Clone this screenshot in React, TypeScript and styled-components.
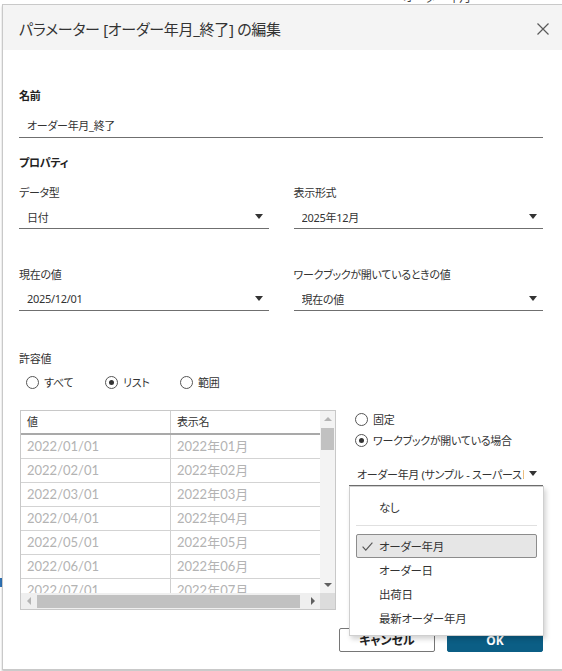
import React from "react";
import styled, { createGlobalStyle } from "styled-components";

const GlobalStyle = createGlobalStyle`
    html, body {
        margin: 0;
        padding: 0;
        background: #ffffff;
    }
    body {
        font-family: "Noto Sans", "Noto Sans CJK JP", sans-serif;
        font-feature-settings: "palt";
        letter-spacing: -0.3px;
        color: #333333;
    }
    * {
        box-sizing: border-box;
    }
`;

const rows = [
    ["2022/01/01", "2022年01月"],
    ["2022/02/01", "2022年02月"],
    ["2022/03/01", "2022年03月"],
    ["2022/04/01", "2022年04月"],
    ["2022/05/01", "2022年05月"],
    ["2022/06/01", "2022年06月"],
    ["2022/07/01", "2022年07月"],
];

const menuItems = ["オーダー年月", "オーダー日", "出荷日", "最新オーダー年月"];

const Radio = ({ checked, label }: { checked?: boolean; label: string }) => (
    <RadioLabel>
        <RadioCircle $checked={checked} />
        {label}
    </RadioLabel>
);

const App = () => {
    return (
        <>
            <GlobalStyle />
            <Screen>
                <BehindText>オーダー年月</BehindText>
                <BehindMark />
                <Dialog>
                    <Header>
                        <Title>パラメーター [オーダー年月_終了] の編集</Title>
                        <CloseButton aria-label="閉じる">
                            <svg width="12" height="12" viewBox="0 0 12 12">
                                <path
                                    d="M0.5 0.5 L11.5 11.5 M11.5 0.5 L0.5 11.5"
                                    stroke="#5a5a5a"
                                    strokeWidth="1.2"
                                />
                            </svg>
                        </CloseButton>
                    </Header>
                    <Body>
                        <SectionLabel $top={38}>名前</SectionLabel>
                        <TextField>オーダー年月_終了</TextField>
                        <SectionLabel $top={17}>プロパティ</SectionLabel>
                        <FieldGrid>
                            <Field>
                                <Label>データ型</Label>
                                <Select>
                                    <SelectValue>日付</SelectValue>
                                    <Arrow />
                                </Select>
                            </Field>
                            <Field>
                                <Label>表示形式</Label>
                                <Select>
                                    <SelectValue>2025年12月</SelectValue>
                                    <Arrow />
                                </Select>
                            </Field>
                            <Field>
                                <Label>現在の値</Label>
                                <Select>
                                    <SelectValue>2025/12/01</SelectValue>
                                    <Arrow />
                                </Select>
                            </Field>
                            <Field>
                                <Label>ワークブックが開いているときの値</Label>
                                <Select>
                                    <SelectValue>現在の値</SelectValue>
                                    <Arrow />
                                </Select>
                            </Field>
                        </FieldGrid>
                        <Label $top={40}>許容値</Label>
                        <RadioRow>
                            <Radio label="すべて" />
                            <Radio label="リスト" checked />
                            <Radio label="範囲" />
                        </RadioRow>
                        <ListArea>
                            <Table>
                                <TableContent>
                                    <HeaderRow>
                                        <HeadCell>値</HeadCell>
                                        <HeadCell>表示名</HeadCell>
                                    </HeaderRow>
                                    {rows.map((row, index) => (
                                        <Row key={index}>
                                            <Cell>{row[0]}</Cell>
                                            <Cell>{row[1]}</Cell>
                                        </Row>
                                    ))}
                                </TableContent>
                                <VScroll>
                                    <ScrollButton>
                                        <TriUp />
                                    </ScrollButton>
                                    <VThumb />
                                    <ScrollButton>
                                        <TriDown />
                                    </ScrollButton>
                                </VScroll>
                                <HScroll>
                                    <ScrollButton>
                                        <TriLeft />
                                    </ScrollButton>
                                    <HThumb />
                                    <ScrollButton>
                                        <TriRight />
                                    </ScrollButton>
                                </HScroll>
                                <Corner />
                            </Table>
                            <SidePanel>
                                <SideRadios>
                                    <Radio label="固定" />
                                    <Radio label="ワークブックが開いている場合" checked />
                                </SideRadios>
                                <SourceSelect>
                                    <Select>
                                        <SelectValue>
                                            オーダー年月 (サンプル - スーパーストア)
                                        </SelectValue>
                                        <Arrow />
                                    </Select>
                                    <Menu>
                                        <MenuItem>なし</MenuItem>
                                        <MenuSeparator />
                                        {menuItems.map((item, index) => (
                                            <MenuItem key={item} $selected={index === 0}>
                                                {index === 0 && (
                                                    <CheckMark width="11" height="9" viewBox="0 0 11 9">
                                                        <polyline
                                                            points="0.6,4.6 3.8,8.2 10.4,0.6"
                                                            fill="none"
                                                            stroke="#555"
                                                            strokeWidth="1.1"
                                                        />
                                                    </CheckMark>
                                                )}
                                                {item}
                                            </MenuItem>
                                        ))}
                                    </Menu>
                                </SourceSelect>
                            </SidePanel>
                        </ListArea>
                        <Footer>
                            <Button>キャンセル</Button>
                            <Button $primary>OK</Button>
                        </Footer>
                    </Body>
                </Dialog>
            </Screen>
        </>
    );
};

const Screen = styled.div`
    position: relative;
    width: 562px;
    height: 671px;
    overflow: hidden;
    background: #ffffff;
`;

const BehindText = styled.div`
    position: absolute;
    top: -10px;
    left: 403px;
    font-size: 12px;
    line-height: 16px;
    color: #444444;
`;

const BehindMark = styled.div`
    position: absolute;
    left: 0;
    top: 578px;
    width: 2px;
    height: 9px;
    background: #2f73b6;
`;

const Dialog = styled.div`
    position: absolute;
    top: 4px;
    left: 2px;
    width: 566px;
    height: 666px;
    background: #ffffff;
    border: 1px solid #c9c9c9;
    box-shadow: 0 2px 2px rgba(0, 0, 0, 0.22);
    display: flex;
    flex-direction: column;
`;

const Header = styled.div`
    height: 45px;
    flex-shrink: 0;
    background: #f4f4f4;
    display: flex;
    align-items: center;
    justify-content: space-between;
    padding: 2px 18px 0 16px;
`;

const Title = styled.h1`
    margin: 0;
    font-size: 15px;
    font-weight: 400;
    color: #333333;
`;

const CloseButton = styled.button`
    border: none;
    background: none;
    padding: 0;
    width: 12px;
    height: 12px;
    display: flex;
    cursor: pointer;
`;

const Body = styled.div`
    flex: 1;
    display: flex;
    flex-direction: column;
    padding: 0 24px 0 16px;
`;

const SectionLabel = styled.div<{ $top: number }>`
    margin-top: ${(props) => props.$top}px;
    font-size: 11px;
    font-weight: 700;
    line-height: 16px;
    color: #222222;
`;

const Label = styled.div<{ $top?: number }>`
    margin-top: ${(props) => props.$top || 0}px;
    font-size: 11px;
    line-height: 16px;
    color: #333333;
    white-space: nowrap;
`;

const TextField = styled.div`
    margin-top: 11px;
    height: 23px;
    border-bottom: 1px solid #6f6f6f;
    padding: 0 8px;
    font-size: 11px;
    line-height: 22px;
    color: #333333;
`;

const FieldGrid = styled.div`
    margin-top: 14px;
    display: grid;
    grid-template-columns: 1fr 1fr;
    column-gap: 25px;
    row-gap: 38px;
`;

const Field = styled.div`
    display: flex;
    flex-direction: column;
    gap: 5px;
`;

const Select = styled.div`
    height: 23px;
    border-bottom: 1px solid #6f6f6f;
    display: flex;
    align-items: center;
    padding: 0 6px 1px 8px;
    font-size: 11px;
    color: #333333;
    cursor: pointer;
`;

const SelectValue = styled.span`
    flex: 1;
    min-width: 0;
    overflow: hidden;
    white-space: nowrap;
    margin-right: 5px;
`;

const Arrow = styled.span`
    flex-shrink: 0;
    width: 0;
    height: 0;
    border-left: 4px solid transparent;
    border-right: 4px solid transparent;
    border-top: 5px solid #333333;
`;

const RadioRow = styled.div`
    margin-top: 7px;
    padding-left: 7px;
    display: grid;
    grid-template-columns: 79px 75px auto;
`;

const RadioLabel = styled.label`
    display: flex;
    align-items: center;
    gap: 5px;
    height: 16px;
    font-size: 11px;
    color: #333333;
    white-space: nowrap;
`;

const RadioCircle = styled.span<{ $checked?: boolean }>`
    width: 13px;
    height: 13px;
    border-radius: 50%;
    border: 1px solid #555555;
    background: #ffffff;
    display: flex;
    align-items: center;
    justify-content: center;
    flex-shrink: 0;
    &::after {
        content: "";
        width: 5px;
        height: 5px;
        border-radius: 50%;
        background: ${(props) => (props.$checked ? "#333333" : "transparent")};
    }
`;

const ListArea = styled.div`
    margin-top: 20px;
    padding-left: 1px;
    height: 200px;
    display: flex;
    gap: 13px;
`;

const Table = styled.div`
    width: 316px;
    height: 200px;
    flex-shrink: 0;
    border: 1px solid #c8c8c8;
    display: grid;
    grid-template-columns: 1fr 15px;
    grid-template-rows: 1fr 16px;
`;

const TableContent = styled.div`
    overflow: hidden;
`;

const HeaderRow = styled.div`
    display: grid;
    grid-template-columns: 150px 1fr;
    height: 24px;
    border-bottom: 2px solid #a9a9a9;
`;

const Row = styled.div`
    display: grid;
    grid-template-columns: 150px 1fr;
    height: 24px;
    border-bottom: 1px solid #d3d3d3;
`;

const HeadCell = styled.div`
    padding-left: 6px;
    font-size: 11px;
    line-height: 22px;
    color: #333333;
    &:first-child {
        border-right: 1px solid #d0d0d0;
    }
`;

const Cell = styled.div`
    padding-left: 6px;
    font-family: Lato, "Noto Sans CJK JP", sans-serif;
    font-size: 13px;
    letter-spacing: 0;
    line-height: 23px;
    color: #b3b3b3;
    white-space: nowrap;
    &:first-child {
        border-right: 1px solid #d0d0d0;
    }
`;

const VScroll = styled.div`
    background: #f3f3f3;
    display: flex;
    flex-direction: column;
    justify-content: space-between;
    position: relative;
`;

const HScroll = styled.div`
    background: #efefef;
    display: flex;
    align-items: center;
`;

const ScrollButton = styled.div`
    width: 15px;
    height: 16px;
    flex-shrink: 0;
    display: flex;
    align-items: center;
    justify-content: center;
`;

const VThumb = styled.div`
    position: absolute;
    top: 17px;
    left: 1px;
    width: 13px;
    height: 22px;
    background: #c1c1c1;
`;

const HThumb = styled.div`
    flex: 1;
    height: 13px;
    margin: 0 5px 0 1px;
    background: #c1c1c1;
`;

const Corner = styled.div`
    background: #dcdcdc;
`;

const TriUp = styled.span`
    border-left: 4px solid transparent;
    border-right: 4px solid transparent;
    border-bottom: 4px solid #b4b4b4;
`;

const TriDown = styled.span`
    border-left: 4px solid transparent;
    border-right: 4px solid transparent;
    border-top: 4px solid #606060;
`;

const TriLeft = styled.span`
    border-top: 4px solid transparent;
    border-bottom: 4px solid transparent;
    border-right: 4px solid #b4b4b4;
`;

const TriRight = styled.span`
    border-top: 4px solid transparent;
    border-bottom: 4px solid transparent;
    border-left: 4px solid #606060;
`;

const SidePanel = styled.div`
    flex: 1;
    min-width: 0;
    display: flex;
    flex-direction: column;
    padding-top: 1px;
`;

const SideRadios = styled.div`
    display: flex;
    flex-direction: column;
    gap: 5px;
    padding-left: 6px;
`;

const SourceSelect = styled.div`
    position: relative;
    margin-top: 15px;
`;

const Menu = styled.ul`
    position: absolute;
    top: 100%;
    left: 0;
    width: 195px;
    margin: 0;
    padding: 8px 0 5px;
    list-style: none;
    background: #ffffff;
    border: 1px solid #cfcfcf;
    box-shadow: 2px 3px 5px rgba(0, 0, 0, 0.18);
    z-index: 10;
`;

const MenuItem = styled.li<{ $selected?: boolean }>`
    position: relative;
    height: 24px;
    margin: 0 6px;
    padding-left: 22px;
    display: flex;
    align-items: center;
    font-size: 11.5px;
    color: #333333;
    border: 1px solid ${(props) => (props.$selected ? "#8c8c8c" : "transparent")};
    border-radius: 2px;
    background: ${(props) => (props.$selected ? "#e6e6e6" : "transparent")};
    cursor: pointer;
`;

const MenuSeparator = styled.li`
    height: 1px;
    margin: 6px 6px 8px;
    background: #e0e0e0;
`;

const CheckMark = styled.svg`
    position: absolute;
    left: 5px;
    top: 7px;
`;

const Footer = styled.div`
    margin-top: 18px;
    display: flex;
    justify-content: flex-end;
    gap: 12px;
`;

const Button = styled.button<{ $primary?: boolean }>`
    width: 96px;
    height: 24px;
    border-radius: 2px;
    border: 1px solid ${(props) => (props.$primary ? "#0b5e85" : "#767676")};
    background: ${(props) => (props.$primary ? "#0b5e85" : "#ffffff")};
    color: ${(props) => (props.$primary ? "#ffffff" : "#222222")};
    font-family: "Noto Sans", "Noto Sans CJK JP", sans-serif;
    font-feature-settings: "palt";
    font-size: 12px;
    font-weight: 700;
    cursor: pointer;
`;

export default App;
